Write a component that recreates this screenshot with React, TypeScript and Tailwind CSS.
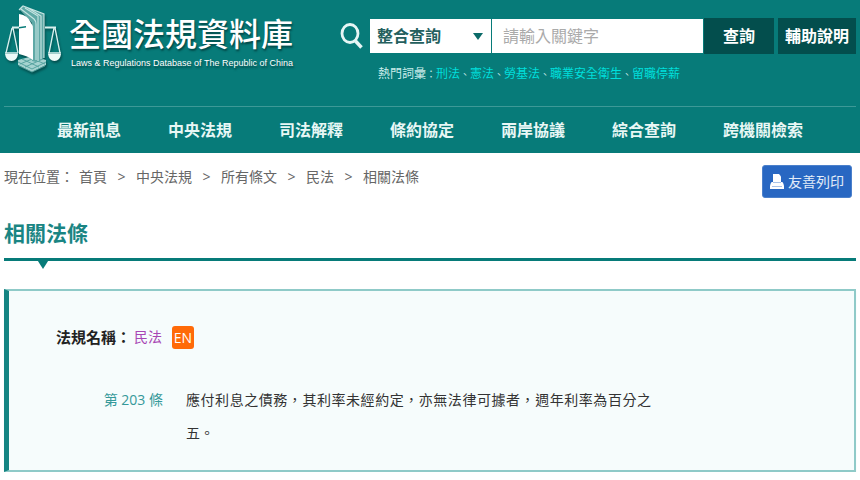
import {Fragment} from "react";

const navLinks = ["最新訊息", "中央法規", "司法解釋", "條約協定", "兩岸協議", "綜合查詢", "跨機關檢索"];
const hotWords = ["刑法", "憲法", "勞基法", "職業安全衛生", "留職停薪"];
const breadcrumbs = ["首頁", "中央法規", "所有條文", "民法", "相關法條"];

function Logo() {
    return (
        <svg viewBox="0 0 60 68" className="h-[68px] w-[60px] shrink-0 drop-shadow-[1px_2px_1px_rgba(0,50,50,0.6)]" aria-hidden="true">
            {/* scales */}
            <g fill="none" stroke="#d9f0ee" strokeWidth="1.3">
                <path d="M7 22.5h10M40 22.5h11" strokeWidth="1.8" />
                <path d="M7 23 1 48M8 23l5 25M49 23l-5 25M50 23l5 25" />
                <path d="M0 48h13M43 48h13" />
            </g>
            <path d="M0 49h13q-1 7-6.5 7T0 49ZM43 49h13q-1 7-6.5 7T43 49Z" fill="#eefaf8" />
            {/* base */}
            <path d="m13 55 15-4 13 4v5l-14 7-14-7Z" fill="#a5d3d0" />
            <path d="m13 57 14 7 14-7M14 61l13 6 13-6M17 54l17 8M23 52l17 7M38 54l-18 8M32 52l-17 7" fill="none" stroke="#4f9f9c" strokeWidth="0.9" />
            {/* book */}
            <path d="m14 4 3-3 22 8v44l-8 4-4-1V18Z" fill="#5fa9a6" />
            <path d="m16 4 13 10q2 2 2 5v36M20 3l13 8v45M23 3l13 8v43M14 5l4-4 21 8v44" fill="none" stroke="#c6e5e3" strokeWidth="1.1" />
            <path d="M14 9q9 1 12 9 2 2 2 6v31q-5-4-14-6Z" fill="#fff" />
            <path d="m14 22 7-1v1.5l-7 1Z" fill="#077b79" />
        </svg>
    );
}

function SearchIcon() {
    return (
        <svg viewBox="0 0 24 28" className="h-7 w-6 shrink-0" fill="none" stroke="#e6f6f5" aria-hidden="true">
            <ellipse cx="10" cy="11.5" rx="8" ry="9" strokeWidth="2.8" />
            <path d="m15.5 19 6 6.5" strokeWidth="3.5" />
        </svg>
    );
}

function PrintIcon() {
    return (
        <svg viewBox="0 0 14 16" className="h-4 w-3.5 shrink-0" fill="#fff" aria-hidden="true">
            <path d="M3 0h6l2 2.5V8H3Z" />
            <path d="M2 8h10q1 0 1.5 2l.5 2v3H0v-3l.5-2Q1 8 2 8Z" />
            <path d="M3 8h8v1H3ZM2 12h10v1H2Z" fill="#a9c3e8" />
        </svg>
    );
}

function Header() {
    return (
        <header className="bg-[#077b79] px-1 text-white">
            <div className="flex h-[106px] items-start justify-between">
                <a href="#home" className="flex items-start pt-[5px] pl-px">
                    <Logo />
                    <span className="flex flex-col pt-1.5 pl-1 [text-shadow:1px_2px_2px_rgba(0,50,50,0.7)]">
                        <span className="text-[32px] leading-[46px] font-medium whitespace-nowrap">全國法規資料庫</span>
                        <span className="pl-0.5 font-[Liberation_Sans,sans-serif] text-[9px] leading-3 whitespace-nowrap">
                            Laws &amp; Regulations Database of The Republic of China
                        </span>
                    </span>
                </a>
                <form className="flex items-start pt-[18px]" onSubmit={(e) => e.preventDefault()}>
                    <div className="pt-1 pr-1.5">
                        <SearchIcon />
                    </div>
                    <div className="flex flex-col">
                        <div className="flex h-9 items-center">
                            <div className="relative mr-px h-[34px] w-[121px]">
                                <select
                                    aria-label="查詢類別"
                                    className="h-full w-full appearance-none bg-white pl-[7px] text-base leading-6 font-bold text-[#245f5e]"
                                >
                                    <option>整合查詢</option>
                                </select>
                                <span className="pointer-events-none absolute top-3.5 right-2 border-x-[5px] border-t-[7px] border-x-transparent border-t-[#0b6b69]" />
                            </div>
                            <input
                                type="text"
                                aria-label="關鍵字"
                                placeholder="請輸入關鍵字"
                                className="h-[34px] w-[211px] bg-white pl-[11px] text-base text-gray-700 placeholder:text-[#aaa]"
                            />
                            <button type="submit" className="ml-px h-9 w-[70px] bg-[#034e4d] text-base font-bold">
                                查詢
                            </button>
                            <button type="button" className="ml-1 h-9 w-[78px] bg-[#034e4d] text-base font-bold">
                                輔助說明
                            </button>
                        </div>
                        <p className="flex items-center pt-2.5 pl-2 text-xs leading-5 text-[#c9ebe9]">
                            熱門詞彙
                            <span className="text-[10px]">：</span>
                            {hotWords.map((word, index) => (
                                <Fragment key={word}>
                                    {index > 0 && <span className="text-[10px]">、</span>}
                                    <a href="#search" className="text-[#00dfdc]">
                                        {word}
                                    </a>
                                </Fragment>
                            ))}
                        </p>
                    </div>
                </form>
            </div>
            <nav className="flex h-[47px] items-center gap-[47px] border-t border-t-[#3d9997] pl-[53px]">
                {navLinks.map((title) => (
                    <a key={title} href="#nav" className="text-base leading-6 font-bold whitespace-nowrap text-[#e8f7f5]">
                        {title}
                    </a>
                ))}
            </nav>
        </header>
    );
}

export default function App() {
    return (
        <div lang="zh-Hant" className="bg-white font-[Open_Sans,Noto_Sans_CJK_TC,sans-serif]">
            <Header />
            <main className="px-1">
                <div className="flex items-start justify-between pt-3 pr-1">
                    <nav aria-label="breadcrumb" className="flex items-center text-sm leading-6 text-[#666]">
                        <span className="pr-[5px]">現在位置：</span>
                        {breadcrumbs.map((title, index) => (
                            <Fragment key={title}>
                                {index > 0 && <span className="w-[29px] text-center">&gt;</span>}
                                <a href="#crumb">{title}</a>
                            </Fragment>
                        ))}
                    </nav>
                    <button
                        type="button"
                        className="flex h-[33px] w-[90px] items-center justify-center gap-1 rounded-[3px] border border-[#4b80cb] bg-[#2867c2] text-sm text-[#e3ecf8]"
                    >
                        <PrintIcon />
                        友善列印
                    </button>
                </div>
                <div className="relative border-b-[3px] border-b-[#077b79] pt-5 pb-2.5">
                    <h2 className="text-[21px] leading-[30px] font-bold text-[#1a8583]">相關法條</h2>
                    <span className="absolute top-full left-8 border-x-[7px] border-t-[11px] border-x-transparent border-t-[#077b79]" />
                </div>
                <section className="mt-7 border-2 border-l-[5px] border-[#8fcac8] border-l-[#148482] bg-[#f6fcfc] pt-[34px] pb-[21px] pl-[47px] shadow-[0_2px_1px_#e3f1f0]">
                    <div className="flex items-center">
                        <h3 className="text-[15px] leading-6 font-bold text-[#222]">法規名稱：</h3>
                        <a href="#law" className="pl-[3px] text-sm leading-6 text-[#a846b4]">
                            民法
                        </a>
                        <a
                            href="#en"
                            className="ml-2.5 h-[23px] w-[22px] rounded-[3px] bg-[#ff6a08] text-center text-sm leading-[23px] text-white"
                        >
                            EN
                        </a>
                    </div>
                    <div className="flex items-start pt-[34px] text-sm leading-[33px]">
                        <a href="#article" className="w-[107px] shrink-0 text-right whitespace-nowrap text-[#35999a]">
                            第 203 條
                        </a>
                        <p className="ml-[23px] max-w-[465px] text-justify text-[#333]">
                            應付利息之債務，其利率未經約定，亦無法律可據者，週年利率為百分之五。
                        </p>
                    </div>
                </section>
            </main>
        </div>
    );
}
